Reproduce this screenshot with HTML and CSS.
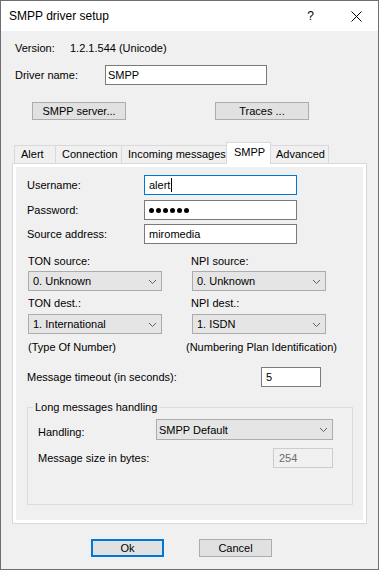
FILE: index.html
```html
<!DOCTYPE html>
<html lang="en">
<head>
  <meta charset="UTF-8">
  <title>SMPP driver setup</title>
  <link rel="stylesheet" href="styles.css">
</head>
<body>
  <div class="window">
    <div class="titlebar">
      <span class="title">SMPP driver setup</span>
      <span class="help">?</span>
      <svg class="close" width="11" height="11" viewBox="0 0 11 11">
        <path d="M0.5 0.5L10.5 10.5M10.5 0.5L0.5 10.5" stroke="#000" stroke-width="1" fill="none"/>
      </svg>
    </div>

    <div class="dialog">
      <div class="version-row">
        <span class="top-label version-label">Version:</span>
        <span>1.2.1.544 (Unicode)</span>
      </div>
      <div class="driver-row">
        <span class="top-label driver-label">Driver name:</span>
        <div class="edit driver-edit">SMPP</div>
      </div>
      <div class="top-buttons">
        <div class="btn btn-server">SMPP server...</div>
        <div class="btn btn-traces">Traces ...</div>
      </div>

      <div class="tabs">
        <div class="tab tab-alert">Alert</div>
        <div class="tab tab-connection">Connection</div>
        <div class="tab tab-incoming">Incoming messages</div>
        <div class="tab tab-smpp active">SMPP</div>
        <div class="tab tab-advanced">Advanced</div>
      </div>

      <div class="panel">
        <div class="page">
          <div class="field-row">
            <span class="field-label">Username:</span>
            <div class="edit field-edit focused">alert<span class="caret"></span></div>
          </div>
          <div class="field-row row-password">
            <span class="field-label">Password:</span>
            <div class="edit field-edit">
              <span class="dot"></span><span class="dot"></span><span class="dot"></span><span class="dot"></span><span class="dot"></span><span class="dot"></span>
            </div>
          </div>
          <div class="field-row row-source">
            <span class="field-label">Source address:</span>
            <div class="edit field-edit">miromedia</div>
          </div>

          <div class="combo-grid labels-first">
            <span>TON source:</span>
            <span>NPI source:</span>
          </div>
          <div class="combo-grid selects-first">
            <div class="combo">
              <span class="combo-text">0. Unknown</span>
              <svg class="chevron" width="7" height="4" viewBox="0 0 7 4"><path d="M0 0L3.5 3.5L7 0" stroke="#606060" fill="none"/></svg>
            </div>
            <div class="combo combo-right">
              <span class="combo-text">0. Unknown</span>
              <svg class="chevron" width="7" height="4" viewBox="0 0 7 4"><path d="M0 0L3.5 3.5L7 0" stroke="#606060" fill="none"/></svg>
            </div>
          </div>
          <div class="combo-grid labels-second">
            <span>TON dest.:</span>
            <span>NPI dest.:</span>
          </div>
          <div class="combo-grid selects-second">
            <div class="combo">
              <span class="combo-text">1. International</span>
              <svg class="chevron" width="7" height="4" viewBox="0 0 7 4"><path d="M0 0L3.5 3.5L7 0" stroke="#606060" fill="none"/></svg>
            </div>
            <div class="combo combo-right">
              <span class="combo-text">1. ISDN</span>
              <svg class="chevron" width="7" height="4" viewBox="0 0 7 4"><path d="M0 0L3.5 3.5L7 0" stroke="#606060" fill="none"/></svg>
            </div>
          </div>
          <div class="combo-grid helper-row">
            <span>(Type Of Number)</span>
            <span class="helper-right">(Numbering Plan Identification)</span>
          </div>

          <div class="timeout-row">
            <span class="timeout-label">Message timeout (in seconds):</span>
            <div class="edit timeout-edit">5</div>
          </div>

          <fieldset class="group">
            <legend>Long messages handling</legend>
            <div class="group-row handling-row">
              <span class="group-label handling-label">Handling:</span>
              <div class="combo handling-combo">
                <span class="combo-text">SMPP Default</span>
                <svg class="chevron" width="7" height="4" viewBox="0 0 7 4"><path d="M0 0L3.5 3.5L7 0" stroke="#606060" fill="none"/></svg>
              </div>
            </div>
            <div class="group-row size-row">
              <span class="group-label size-label">Message size in bytes:</span>
              <div class="edit size-edit disabled">254</div>
            </div>
          </fieldset>
        </div>
      </div>

      <div class="footer">
        <div class="btn btn-ok">Ok</div>
        <div class="btn btn-cancel">Cancel</div>
      </div>
    </div>
  </div>
</body>
</html>
```

FILE: styles.css
```css
* {
  box-sizing: border-box;
}

body {
  margin: 0;
  font-family: "Liberation Sans", Arial, sans-serif;
  font-size: 11px;
  line-height: 14px;
  color: #000;
  background: #f0f0f0;
}

.window {
  width: 379px;
  height: 570px;
  border: 1px solid #6f6f6f;
  background: #f0f0f0;
}

/* title bar */

.titlebar {
  height: 30px;
  background: #fff;
  display: flex;
  align-items: center;
  padding: 0 16px 0 8px;
  font-size: 12px;
}

.title {
  flex: 1;
}

.help {
  margin-right: 37px;
  font-size: 12px;
}

/* dialog body */

.dialog {
  padding-left: 11px;
}

.version-row {
  margin-top: 10px;
  height: 14px;
  display: flex;
}

.top-label {
  margin-left: 3px;
}

.version-label {
  width: 55px;
}

.driver-row {
  margin-top: 10px;
  height: 20px;
  display: flex;
  align-items: center;
}

.driver-label {
  width: 90px;
}

.edit {
  height: 20px;
  background: #fff;
  border: 1px solid #7a7a7a;
  display: flex;
  align-items: center;
  padding-left: 4px;
}

.driver-edit {
  width: 162px;
  padding-left: 2px;
}

.focused {
  border-color: #0078d7;
}

.caret {
  width: 1px;
  height: 14px;
  background: #000;
  margin-left: 1px;
}

.disabled {
  background: #f0f0f0;
  border-color: #cccccc;
  color: #6d6d6d;
  padding-left: 5px;
}

.btn {
  height: 18px;
  background: #e1e1e1;
  border: 1px solid #adadad;
  display: flex;
  align-items: center;
  justify-content: center;
}

.top-buttons {
  margin-top: 17px;
  display: flex;
}

.btn-server {
  margin-left: 20px;
  width: 94px;
}

.btn-traces {
  margin-left: 89px;
  width: 94px;
}

/* tabs */

.tabs {
  margin-top: 22px;
  height: 21px;
  padding-left: 2px;
  display: flex;
  align-items: flex-end;
}

.tab {
  height: 18px;
  background: #f0f0f0;
  border: 1px solid #d9d9d9;
  border-bottom: none;
  padding: 1px 0 0 6px;
  margin-left: -1px;
  white-space: nowrap;
}

.tab-alert {
  width: 42px;
  margin-left: 0;
}

.tab-connection {
  width: 67px;
}

.tab-incoming {
  width: 106px;
}

.tab-smpp {
  width: 45px;
}

.tab-advanced {
  width: 59px;
  padding-left: 5px;
}

.tab.active {
  position: relative;
  z-index: 1;
  height: 22px;
  margin-bottom: -1px;
  background: #fff;
  padding: 2px 0 0 7px;
}

.panel {
  width: 355px;
  height: 361px;
  background: #fff;
  border: 1px solid #d9d9d9;
  padding: 3px;
}

.page {
  height: 100%;
  background: #f0f0f0;
  padding-top: 8px;
}

/* SMPP page */

.field-row {
  height: 20px;
  display: flex;
  align-items: center;
}

.row-password {
  margin-top: 5px;
}

.row-source {
  margin-top: 4px;
}

.field-label {
  width: 117px;
  margin-left: 11px;
}

.field-edit {
  width: 153px;
}

.dot {
  width: 5px;
  height: 5px;
  border-radius: 50%;
  background: #000;
  margin-right: 2px;
}

.combo-grid {
  display: grid;
  grid-template-columns: 163px 1fr;
  padding-left: 12px;
}

.labels-first {
  margin-top: 10px;
}

.selects-first {
  margin-top: 3px;
}

.labels-second {
  margin-top: 5px;
}

.selects-second {
  margin-top: 4px;
}

.helper-row {
  margin-top: 6px;
}

.helper-right {
  margin-left: -5px;
}

.combo {
  width: 134px;
  height: 20px;
  background: #e5e5e5;
  border: 1px solid #acacac;
  display: flex;
  align-items: center;
  padding-left: 4px;
}

.combo-right {
  margin-left: 1px;
}

.combo-text {
  flex: 1;
  white-space: nowrap;
}

.chevron {
  margin-right: 5px;
  margin-top: 1px;
}

.timeout-row {
  margin-top: 13px;
  height: 20px;
  display: flex;
  align-items: center;
}

.timeout-label {
  width: 234px;
  margin-left: 11px;
}

.timeout-edit {
  width: 60px;
}

/* group box */

.group {
  margin: 13px 0 0 11px;
  width: 326px;
  padding: 0 0 36px 0;
  border: 1px solid #dcdcdc;
}

.group legend {
  margin-left: 5px;
  padding: 0 2px;
  line-height: 14px;
}

.group-row {
  display: flex;
  align-items: center;
}

.handling-row {
  margin-top: 5px;
  height: 21px;
}

.size-row {
  margin-top: 8px;
  height: 20px;
}

.group-label {
  margin-left: 10px;
}

.handling-label {
  width: 118px;
  padding-top: 4px;
}

.handling-combo {
  width: 177px;
  height: 21px;
  padding-left: 2px;
}

.size-label {
  width: 235px;
}

.size-edit {
  width: 60px;
}

/* footer */

.footer {
  margin-top: 15px;
  display: flex;
}

.btn-ok {
  margin-left: 79px;
  width: 73px;
  border: 2px solid #0078d7;
}

.btn-cancel {
  margin-left: 35px;
  width: 73px;
}
```
